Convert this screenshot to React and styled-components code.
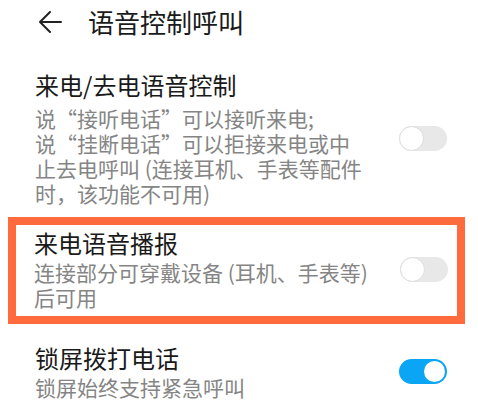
import React from 'react'
import styled, { createGlobalStyle } from 'styled-components'

const GlobalStyle = createGlobalStyle`
  html, body {
    margin: 0;
    padding: 0;
    background: #fff;
  }

  body {
    font-family: "Noto Sans CJK SC", "Noto Sans", sans-serif;
    color: #1a1a1a;
  }
`

const items = [
  {
    title: '来电/去电语音控制',
    lines: [
      '说“接听电话”可以接听来电;',
      '说“挂断电话”可以拒接来电或中',
      '止去电呼叫 (连接耳机、手表等配件',
      '时，该功能不可用)',
    ],
    on: false,
    spaced: true,
  },
  {
    title: '来电语音播报',
    lines: ['连接部分可穿戴设备 (耳机、手表等)', '后可用'],
    on: false,
    highlight: true,
  },
  {
    title: '锁屏拨打电话',
    lines: ['锁屏始终支持紧急呼叫'],
    on: true,
  },
]

function App() {
  return (
    <>
      <GlobalStyle />
      <Page>
        <Header>
          <BackArrow viewBox="0 0 24 22">
            <path d="M12 1 L2 11 L12 21 M2 11 L23 11" />
          </BackArrow>
          <HeaderTitle>语音控制呼叫</HeaderTitle>
        </Header>
        <List>
          {items.map((item) => (
            <Row key={item.title} highlight={item.highlight}>
              <Text>
                <Title>{item.title}</Title>
                <Desc spaced={item.spaced}>
                  {item.lines.map((line, i) => (
                    <Line key={i}>{line}</Line>
                  ))}
                </Desc>
              </Text>
              <Switch on={item.on}>
                <Knob on={item.on} />
              </Switch>
            </Row>
          ))}
        </List>
      </Page>
    </>
  )
}

const Page = styled.div`
  width: 478px;
  height: 413px;
  overflow: hidden;
`

const Header = styled.div`
  display: flex;
  align-items: center;
  height: 44px;
  padding-left: 38px;
`

const BackArrow = styled.svg`
  width: 24px;
  height: 22px;
  fill: none;
  stroke: #222;
  stroke-width: 2;
  stroke-linecap: round;
  stroke-linejoin: round;
  margin-right: 26px;
`

const HeaderTitle = styled.div`
  font-size: 26px;
  line-height: 44px;
  color: #1a1a1a;
`

const List = styled.div`
  display: flex;
  flex-direction: column;
  padding-top: 26px;
`

const Row = styled.div`
  display: flex;
  align-items: center;
  justify-content: space-between;
  box-sizing: border-box;
  padding: ${(p) => (p.highlight ? '3px 9px 6px 18px' : '0 31px 0 35px')};
  margin: ${(p) => (p.highlight ? '11px 13px 19px 8px' : '0')};
  border: ${(p) => (p.highlight ? '8.5px solid #ff6b3d' : 'none')};
`

const Text = styled.div`
  display: flex;
  flex-direction: column;
`

const Title = styled.div`
  font-size: 24px;
  line-height: 30px;
  color: #1a1a1a;
  white-space: nowrap;
`

const Desc = styled.div`
  display: flex;
  flex-direction: column;
  margin-top: ${(p) => (p.spaced ? '6px' : '2px')};
  font-size: 21px;
  line-height: 25px;
  color: #858585;
`

const Line = styled.div`
  white-space: nowrap;
`

const Switch = styled.div`
  position: relative;
  flex-shrink: 0;
  width: 48px;
  height: 25px;
  border-radius: 13px;
  background: ${(p) => (p.on ? '#0aa5f5' : '#e8e8e8')};
`

const Knob = styled.div`
  position: absolute;
  top: ${(p) => (p.on ? '2px' : '0')};
  left: ${(p) => (p.on ? '25px' : '0')};
  box-sizing: border-box;
  width: ${(p) => (p.on ? '21px' : '25px')};
  height: ${(p) => (p.on ? '21px' : '25px')};
  border-radius: 50%;
  background: #fff;
  border: ${(p) => (p.on ? 'none' : '1.5px solid #dcdcdc')};
`

export default App
